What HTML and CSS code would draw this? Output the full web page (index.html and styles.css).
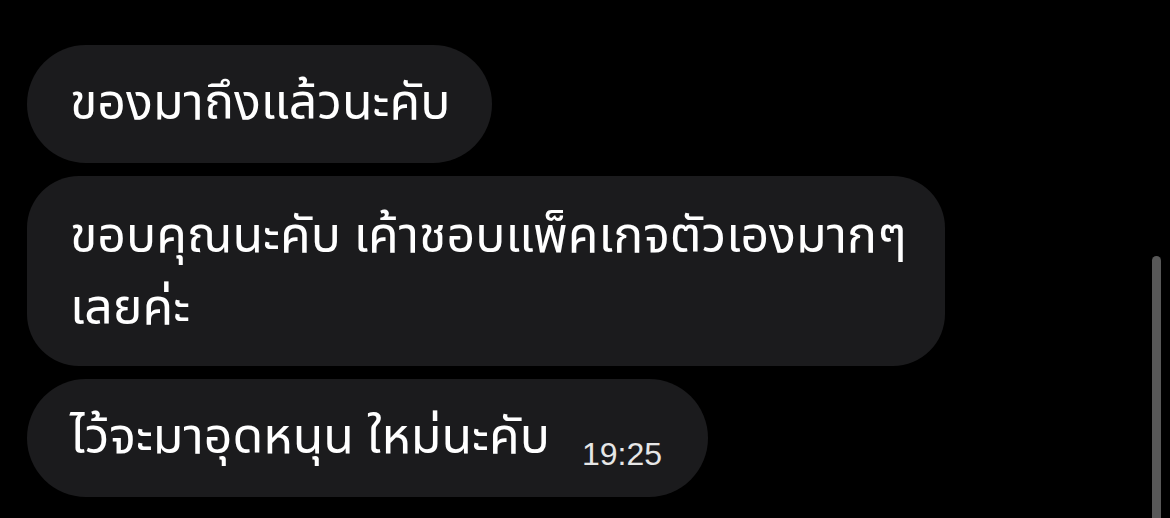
FILE: index.html
```html
<!DOCTYPE html>
<html lang="th">
<head>
<meta charset="utf-8">
<link rel="stylesheet" href="styles.css">
</head>
<body>
<div class="chat">
  <div class="bubble pill first"><span class="msg">ของมาถึงแล้วนะคับ</span></div>
  <div class="bubble multi">
    <div class="lines">
      <div class="msg wide">ขอบคุณนะคับ เค้าชอบแพ็คเกจตัวเองมากๆ</div>
      <div class="msg wide">เลยค่ะ</div>
    </div>
  </div>
  <div class="bubble pill last"><span class="msg">ไว้จะมาอุดหนุน ใหม่นะคับ</span><span class="time">19:25</span></div>
</div>
<div class="scrollbar"></div>
</body>
</html>
```
FILE: styles.css
```css
html, body {
  margin: 0;
  padding: 0;
  background: #000;
  width: 1170px;
  height: 518px;
  overflow: hidden;
}
body {
  font-family: "Noto Sans Thai", "Noto Sans", "DejaVu Sans", sans-serif;
  color: #fff;
  position: relative;
}
.chat {
  display: flex;
  flex-direction: column;
  align-items: flex-start;
  gap: 13px;
  padding: 45px 0 0 27px;
}
.bubble {
  background: #1b1b1d;
  box-sizing: border-box;
  display: flex;
  align-items: center;
  padding: 0 43px;
  white-space: nowrap;
}
.pill {
  height: 118px;
  border-radius: 59px;
}
.first {
  width: 465px;
}
.multi {
  width: 918px;
  height: 190px;
  border-radius: 52px;
  padding-top: 4px;
}
.lines {
  display: flex;
  flex-direction: column;
}
.msg {
  font-size: 50px;
  line-height: 64px;
}
.wide {
  line-height: 72px;
}
.time {
  font-family: "Liberation Sans", Arial, sans-serif;
  font-size: 32px;
  color: #e6e6e6;
  margin-left: 32px;
  padding-top: 32px;
}
.last {
  width: 681px;
}
.scrollbar {
  position: absolute;
  left: 1152px;
  top: 256px;
  width: 9px;
  height: 280px;
  border-radius: 5px;
  background: #585858;
}
```
